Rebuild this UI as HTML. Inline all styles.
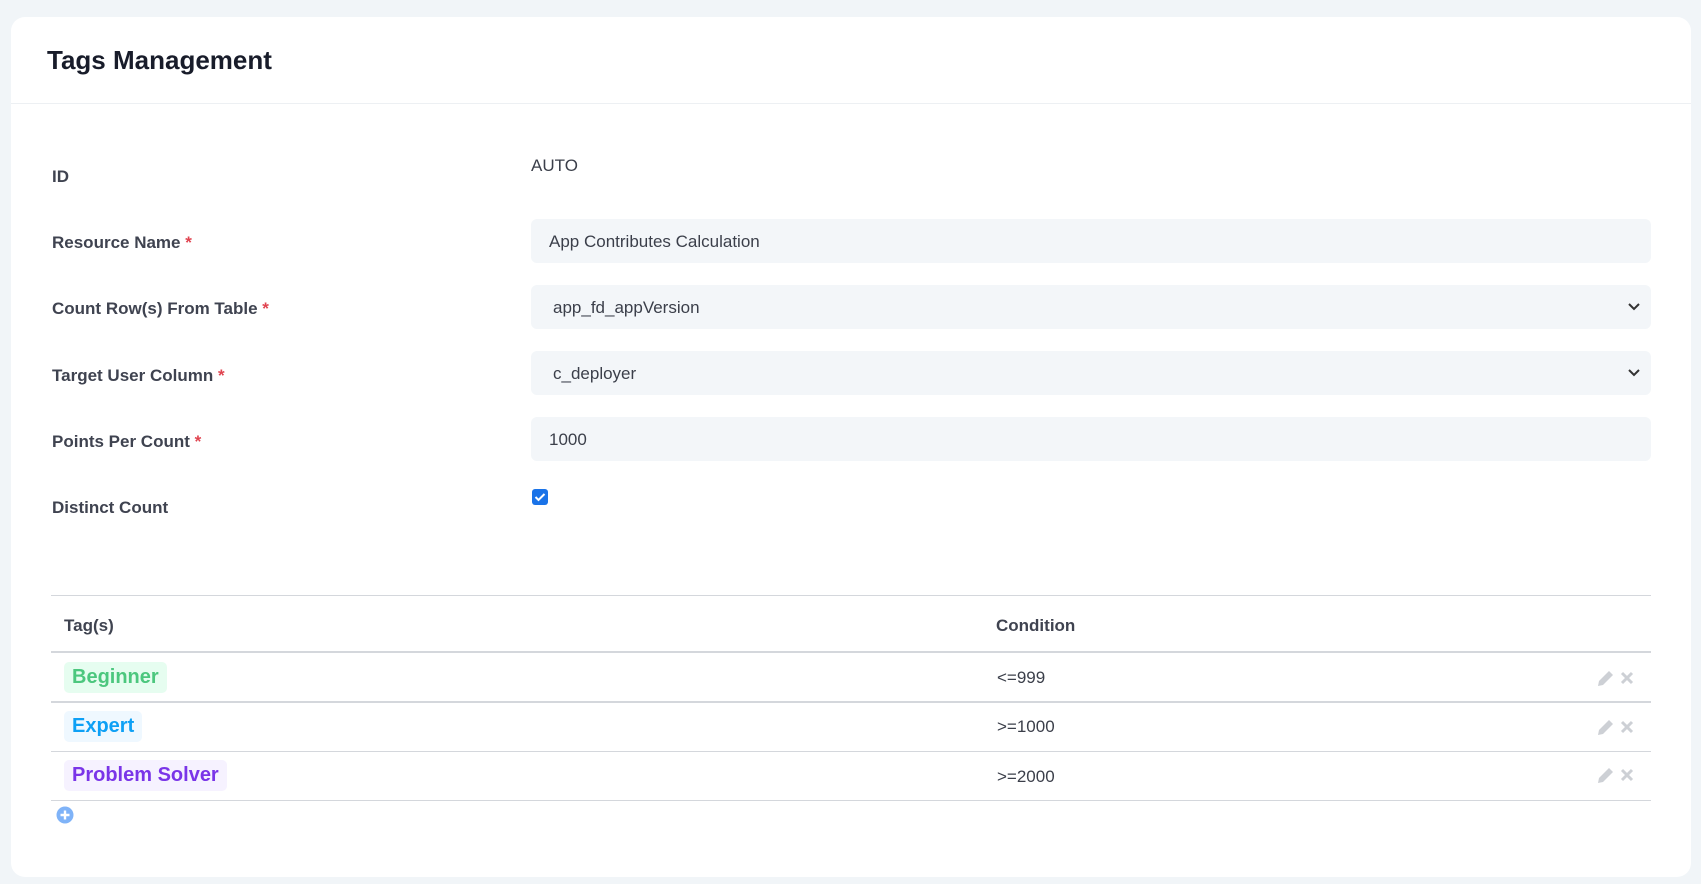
<!DOCTYPE html>
<html><head><style>
*{box-sizing:border-box;margin:0;padding:0}
body{width:1701px;height:884px;background:#f1f5f8;font-family:"Liberation Sans",sans-serif;color:#3b3f4a;position:relative;overflow:hidden}
.card{position:absolute;left:11px;top:17px;width:1680px;height:860px;background:#fff;border-radius:14px}
.title{position:absolute;left:36px;top:28px;font-size:26px;font-weight:bold;color:#181c2a}
.hr{position:absolute;left:0;right:0;top:86px;border-top:1px solid #edf0f3}
.lbl{position:absolute;left:41px;font-size:17px;font-weight:bold;color:#3f4350}
.lbl i{color:#e0434f;font-style:normal}
.fld{position:absolute;left:520px;width:1120px;height:44px;background:#f3f6f9;border-radius:6px;font-size:17px;line-height:46px;padding-left:18px;color:#3b3f4a}
.fld svg{position:absolute;right:10px;top:16px}
.line{position:absolute;left:40px;width:1600px;border-top:2px solid #d4d7dc}
.tag{position:absolute;left:53px;height:31px;line-height:31px;padding:0 8px;border-radius:5px;font-size:20px;font-weight:bold}
.cond{position:absolute;left:986px;font-size:17px}
.ic{position:absolute;left:1584px}
</style></head><body>
<div class="card">
<div class="title">Tags Management</div>
<div class="hr"></div>
<div class="lbl" style="top:150px">ID</div>
<div style="position:absolute;left:520px;top:139px;font-size:17px">AUTO</div>
<div class="lbl" style="top:216px">Resource Name <i>*</i></div>
<div class="fld" style="top:202px">App Contributes Calculation</div>
<div class="lbl" style="top:282px">Count Row(s) From Table <i>*</i></div>
<div class="fld" style="top:268px;padding-left:22px">app_fd_appVersion<svg width="14" height="10"><path d="M2 3l5 5 5-5" stroke="#333" stroke-width="2" fill="none"/></svg></div>
<div class="lbl" style="top:349px">Target User Column <i>*</i></div>
<div class="fld" style="top:334px;padding-left:22px">c_deployer<svg width="14" height="10"><path d="M2 3l5 5 5-5" stroke="#333" stroke-width="2" fill="none"/></svg></div>
<div class="lbl" style="top:415px">Points Per Count <i>*</i></div>
<div class="fld" style="top:400px">1000</div>
<div class="lbl" style="top:481px">Distinct Count</div>
<div style="position:absolute;left:521px;top:472px;width:16px;height:16px;background:#1a73e8;border-radius:3px"><svg width="16" height="16"><path d="M3.5 8l3 3 6-6" stroke="#fff" stroke-width="2" fill="none"/></svg></div>
<div class="line" style="top:578px;border-top-width:1.5px"></div>
<div class="lbl" style="top:599px;left:53px">Tag(s)</div>
<div class="lbl" style="top:599px;left:985px">Condition</div>
<div class="line" style="top:634px"></div>
<div class="tag" style="top:645px;background:#e6fdf0;color:#4cc77e">Beginner</div>
<div class="cond" style="top:651px">&lt;=999</div>
<div class="line" style="top:684px"></div>
<div class="tag" style="top:694px;background:#eff8ff;color:#0ea0f5">Expert</div>
<div class="cond" style="top:700px">&gt;=1000</div>
<div class="line" style="top:734px;border-top-width:1.5px"></div>
<div class="tag" style="top:743px;background:#f6f2ff;color:#7a35e8">Problem Solver</div>
<div class="cond" style="top:750px">&gt;=2000</div>
<div class="line" style="top:783px;border-top-width:1.5px"></div>
<svg style="position:absolute;left:45px;top:789px" width="18" height="18"><circle cx="9" cy="9" r="8.5" fill="#7fb3f8"/><path d="M9 4.5v9M4.5 9h9" stroke="#fff" stroke-width="2.4"/></svg>
<svg class="ic" style="top:651px" width="44" height="20"><path d="M3 18l1-5 10-10 4 4-10 10z" fill="#cdd0d5"/><path d="M27 5l10 10M37 5l-10 10" stroke="#cdd0d5" stroke-width="3"/></svg>
<svg class="ic" style="top:700px" width="44" height="20"><path d="M3 18l1-5 10-10 4 4-10 10z" fill="#cdd0d5"/><path d="M27 5l10 10M37 5l-10 10" stroke="#cdd0d5" stroke-width="3"/></svg>
<svg class="ic" style="top:748px" width="44" height="20"><path d="M3 18l1-5 10-10 4 4-10 10z" fill="#cdd0d5"/><path d="M27 5l10 10M37 5l-10 10" stroke="#cdd0d5" stroke-width="3"/></svg>
</div>
</body></html>
